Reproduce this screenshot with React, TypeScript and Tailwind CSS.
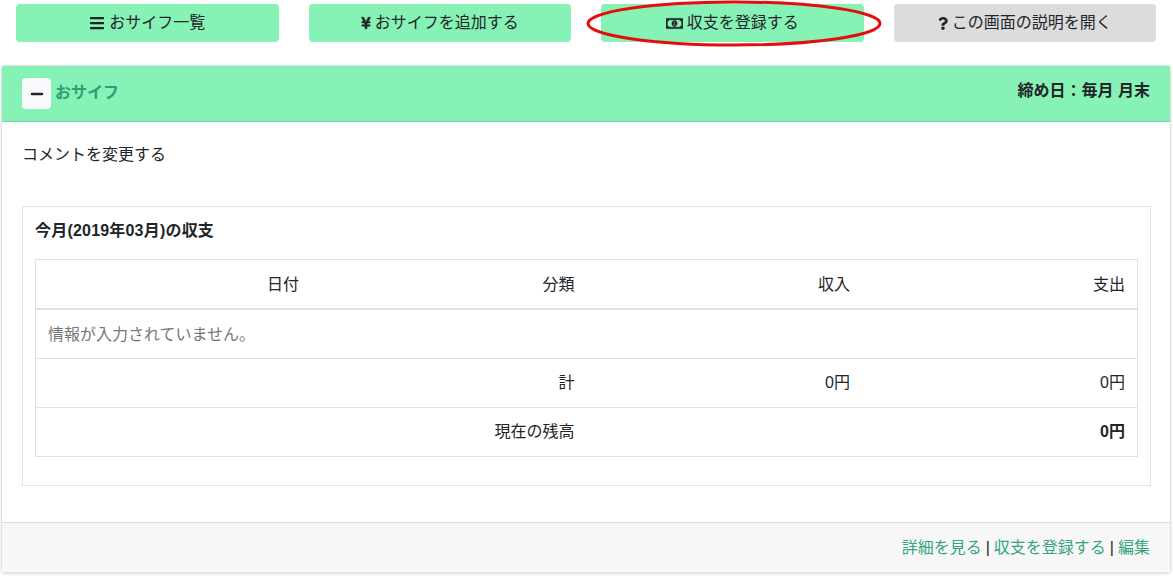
import { FaBars, FaYenSign, FaRegMoneyBillAlt, FaQuestion, FaMinus } from "react-icons/fa";

const buttons = [
  { label: "おサイフ一覧", icon: <FaBars size={16} />, color: "bg-[#86f2b5]" },
  { label: "おサイフを追加する", icon: <FaYenSign size={14} className="w-[10px]" stroke="currentColor" strokeWidth={20} />, color: "bg-[#86f2b5]" },
  { label: "収支を登録する", icon: <FaRegMoneyBillAlt size={17} stroke="currentColor" strokeWidth={24} />, color: "bg-[#86f2b5]" },
  { label: "この画面の説明を開く", icon: <FaQuestion size={13} className="w-[10px]" />, color: "bg-[#dcdcdc]" },
];

export default function App() {
  return (
    <div className="relative h-[576px] overflow-hidden bg-white text-[16px] leading-6 text-[#212529] font-['Liberation_Sans','Noto_Sans_CJK_JP',sans-serif]">
      {/* Top buttons */}
      <div className="grid grid-cols-4 gap-[30px] pl-4 pr-[17px] pt-1">
        {buttons.map((button) => (
          <button
            key={button.label}
            className={`flex h-[38px] items-center justify-center gap-1 rounded ${button.color}`}
          >
            {button.icon}
            {button.label}
          </button>
        ))}
      </div>

      {/* Red marker around the register button */}
      <svg className="absolute left-[585px] top-0" width="298" height="48">
        <ellipse cx="149" cy="23.5" rx="146" ry="21.5" fill="none" stroke="#e30f0f" strokeWidth="3" />
      </svg>

      {/* Wallet card */}
      <div className="ml-[1px] mr-[2px] mt-[23px] flex h-[508px] flex-col rounded border border-[#e3e3e3] shadow-[0_1px_3px_rgba(0,0,0,0.15)]">
        <div className="flex h-[56px] shrink-0 justify-between border-b border-[#6fd6a4] bg-[#86f2b5] px-5">
          <div className="flex items-center gap-1">
            <span className="flex h-[31px] w-[29px] items-center justify-center rounded bg-[#f8f9fa]">
              <FaMinus size={14} />
            </span>
            <span className="-mt-px font-bold text-[#2f9e75]">おサイフ</span>
          </div>
          <div className="pt-[13px] font-bold">締め日：毎月 月末</div>
        </div>

        <div className="flex-1 pl-5 pr-[19px] pt-[21px]">
          <p>コメントを変更する</p>
          <div className="mt-[39px] h-[280px] border border-[#e3e3e3] px-3 pt-3">
            <h2 className="font-bold tracking-[0.2px]">今月(2019年03月)の収支</h2>
            <table className="mt-4 w-full table-fixed border border-[#dee2e6] text-right">
              <thead>
                <tr className="h-[49px] border-b-2 border-[#dee2e6]">
                  <th className="px-3 pt-[2px] font-normal">日付</th>
                  <th className="px-3 pt-[2px] font-normal">分類</th>
                  <th className="px-3 pt-[2px] font-normal">収入</th>
                  <th className="px-3 pt-[2px] font-normal">支出</th>
                </tr>
              </thead>
              <tbody>
                <tr className="h-[50px] border-b border-[#dee2e6]">
                  <td colSpan={4} className="px-3 pt-[3px] text-left text-[#777777]">
                    情報が入力されていません。
                  </td>
                </tr>
                <tr className="h-[49px] border-b border-[#dee2e6]">
                  <td className="px-3" />
                  <td className="px-3">計</td>
                  <td className="px-3">0円</td>
                  <td className="px-3">0円</td>
                </tr>
                <tr className="h-[49px]">
                  <td className="px-3" />
                  <td className="px-3">現在の残高</td>
                  <td className="px-3" />
                  <td className="px-3 font-bold">0円</td>
                </tr>
              </tbody>
            </table>
          </div>
        </div>

        <div className="flex h-[50px] shrink-0 items-center justify-end gap-1 border-t border-[#dcdcdc] bg-[#f7f7f7] px-5">
          <a className="text-[#36a57c]">詳細を見る</a>
          <span>|</span>
          <a className="text-[#36a57c]">収支を登録する</a>
          <span>|</span>
          <a className="text-[#36a57c]">編集</a>
        </div>
      </div>
    </div>
  );
}
